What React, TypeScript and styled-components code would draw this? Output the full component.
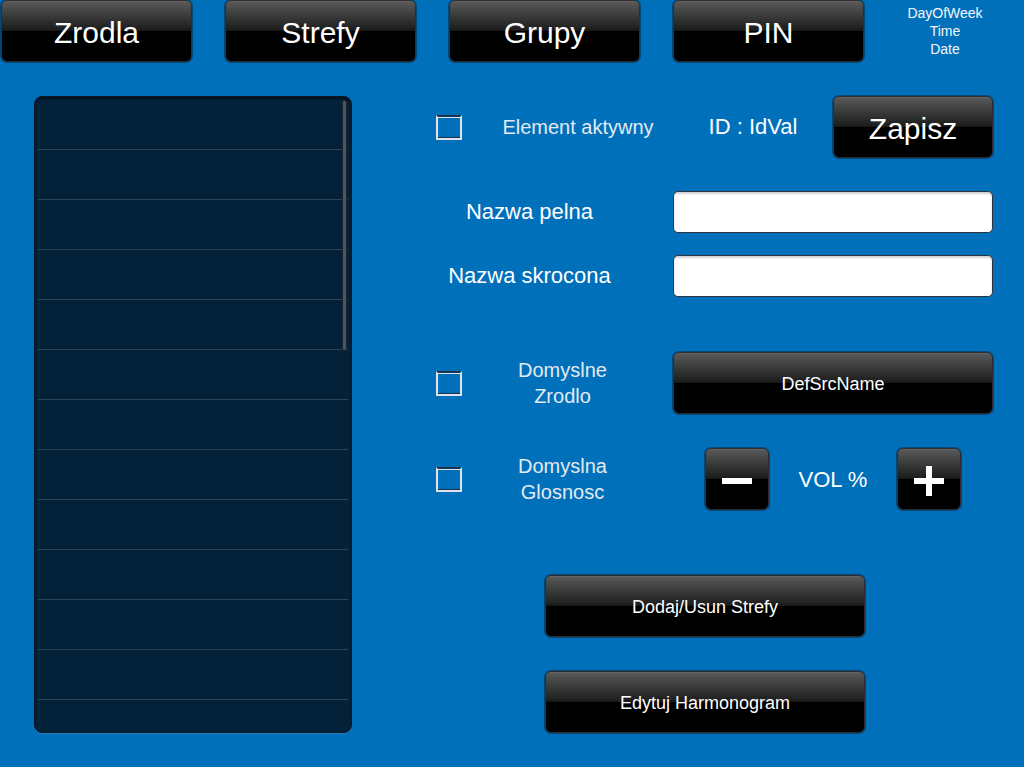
import React from "react";
import styled, { createGlobalStyle } from "styled-components";

const GlobalStyle = createGlobalStyle`
  html, body { margin: 0; padding: 0; background: #0070bb; }
  body { font-family: "Liberation Sans", Arial, sans-serif; }
  * { box-sizing: border-box; }
`;

const Page = styled.div`
  width: 1024px;
  height: 767px;
  background: #0070bb;
  position: relative;
  overflow: hidden;
  font-family: "Liberation Sans", Arial, sans-serif;
  color: #fff;
`;

const TopBar = styled.div`
  display: flex;
  align-items: flex-start;
  gap: 33px;
  padding-left: 1px;
  height: 62px;
`;

const GlossButton = styled.button<{ $w: number; $h?: number; $fs: number }>`
  width: ${(p) => p.$w}px;
  height: ${(p) => p.$h ?? 62}px;
  flex: none;
  border: 1px solid #2e2e2e;
  border-radius: 6px;
  background: linear-gradient(
    to bottom,
    #5a5a5a 0%,
    #3a3a3a 25%,
    #1c1c1c 49%,
    #000 50%,
    #000 100%
  );
  box-shadow: inset 0 1px 0 rgba(255, 255, 255, 0.08), 0 0 0 1px rgba(0, 0, 0, 0.35);
  color: #fff;
  font-family: "Liberation Sans", Arial, sans-serif;
  font-size: ${(p) => p.$fs}px;
  padding: 3px 0 0 0;
  display: flex;
  align-items: center;
  justify-content: center;
  cursor: pointer;
`;

const Clock = styled.div`
  flex: none;
  width: 96px;
  padding-top: 4px;
  font-size: 14px;
  line-height: 18px;
  text-align: center;
  color: #f4f7fa;
`;

const Main = styled.div`
  display: flex;
  align-items: flex-start;
  padding-top: 34px;
  padding-left: 34px;
`;

const ListPanel = styled.div`
  position: relative;
  width: 318px;
  height: 637px;
  background: #03223a;
  border: 1px solid #0b1824;
  border-radius: 8px;
  box-shadow: inset 0 2px 2px rgba(0, 0, 0, 0.45), 0 1px 0 rgba(90, 150, 200, 0.35);
  padding: 3px 3px 0 3px;
  overflow: hidden;
`;

const ListRow = styled.div`
  height: 50px;
  border-bottom: 1px solid #2c4257;
`;

const ScrollThumb = styled.div`
  position: absolute;
  left: 307px;
  top: 3px;
  width: 5px;
  height: 251px;
  border-radius: 3px;
  background: #4a5560;
  border: 1px solid #1a242e;
`;

const Form = styled.div`
  margin-left: 84px;
  width: 557px;
  display: flex;
  flex-direction: column;
`;

const Row = styled.div<{ $mt?: number; $h?: number }>`
  display: flex;
  align-items: center;
  height: ${(p) => p.$h ?? 62}px;
  margin-top: ${(p) => p.$mt ?? 0}px;
`;

const Check = styled.div`
  width: 26px;
  height: 25px;
  flex: none;
  border: 2px solid #dfe4ea;
  border-top-color: #1c3350;
  box-shadow: inset 0 -1px 0 #1c3350, inset 0 1px 0 #dfe4ea;
  background: transparent;
`;

const CheckLabel = styled.div<{ $w: number; $ml?: number; $align?: string }>`
  width: ${(p) => p.$w}px;
  margin-left: ${(p) => p.$ml ?? 0}px;
  font-size: 20px;
  line-height: 26px;
  color: #e3eaf1;
  text-align: ${(p) => p.$align ?? "center"};
  flex: none;
`;

const Label = styled.div<{ $w: number; $ml?: number; $align?: string }>`
  width: ${(p) => p.$w}px;
  margin-left: ${(p) => p.$ml ?? 0}px;
  font-size: 22px;
  color: #fff;
  text-align: ${(p) => p.$align ?? "center"};
  flex: none;
`;

const Spacer = styled.div`
  flex: 1;
`;

const TextInput = styled.div`
  width: 320px;
  height: 42px;
  flex: none;
  background: #fff;
  border: 1px solid #2f3338;
  border-radius: 5px;
  box-shadow: inset 0 2px 2px rgba(0, 0, 0, 0.18);
`;

const VolumeControl = styled.div`
  width: 320px;
  flex: none;
  display: flex;
  align-items: center;
  padding: 0 32px;
`;

const VolText = styled.div`
  flex: 1;
  text-align: center;
  font-size: 22px;
  padding-top: 2px;
`;

const Bottom = styled.div<{ $mt: number }>`
  margin-top: ${(p) => p.$mt}px;
  padding-left: 109px;
`;

const MinusIcon = () => (
  <svg width="32" height="32" viewBox="0 0 32 32">
    <rect x="1" y="13" width="30" height="6" fill="#fff" />
  </svg>
);

const PlusIcon = () => (
  <svg width="32" height="32" viewBox="0 0 32 32">
    <rect x="1" y="13" width="30" height="6" fill="#fff" />
    <rect x="13" y="1" width="6" height="30" fill="#fff" />
  </svg>
);

export default function App() {
  const rows = Array.from({ length: 13 });
  return (
    <>
      <GlobalStyle />
      <Page>
        <TopBar>
          <GlossButton $w={191} $fs={30}>Zrodla</GlossButton>
          <GlossButton $w={191} $fs={30}>Strefy</GlossButton>
          <GlossButton $w={191} $fs={30}>Grupy</GlossButton>
          <GlossButton $w={191} $fs={30}>PIN</GlossButton>
          <Clock>
            <div>DayOfWeek</div>
            <div>Time</div>
            <div>Date</div>
          </Clock>
        </TopBar>
        <Main>
          <ListPanel>
            {rows.map((_, i) => (
              <ListRow key={i} />
            ))}
            <ScrollThumb />
          </ListPanel>
          <Form>
            <Row>
              <Check />
              <CheckLabel $w={160} $ml={36}>Element aktywny</CheckLabel>
              <Label $w={110} $ml={40}>ID : IdVal</Label>
              <Spacer />
              <GlossButton $w={160} $fs={30}>Zapisz</GlossButton>
            </Row>
            <Row $mt={33} $h={42}>
              <Label $w={187}>Nazwa pelna</Label>
              <Spacer />
              <TextInput />
            </Row>
            <Row $mt={22} $h={42}>
              <Label $w={187}>Nazwa skrocona</Label>
              <Spacer />
              <TextInput />
            </Row>
            <Row $mt={55}>
              <Check />
              <CheckLabel $w={201}>
                Domyslne
                <br />
                Zrodlo
              </CheckLabel>
              <Spacer />
              <GlossButton $w={320} $fs={18}>DefSrcName</GlossButton>
            </Row>
            <Row $mt={34}>
              <Check />
              <CheckLabel $w={201}>
                Domyslna
                <br />
                Glosnosc
              </CheckLabel>
              <Spacer />
              <VolumeControl>
                <GlossButton $w={64} $fs={18}>
                  <MinusIcon />
                </GlossButton>
                <VolText>VOL %</VolText>
                <GlossButton $w={64} $fs={18}>
                  <PlusIcon />
                </GlossButton>
              </VolumeControl>
            </Row>
            <Bottom $mt={65}>
              <GlossButton $w={320} $fs={18}>Dodaj/Usun Strefy</GlossButton>
            </Bottom>
            <Bottom $mt={34}>
              <GlossButton $w={320} $fs={18}>Edytuj Harmonogram</GlossButton>
            </Bottom>
          </Form>
        </Main>
      </Page>
    </>
  );
}
